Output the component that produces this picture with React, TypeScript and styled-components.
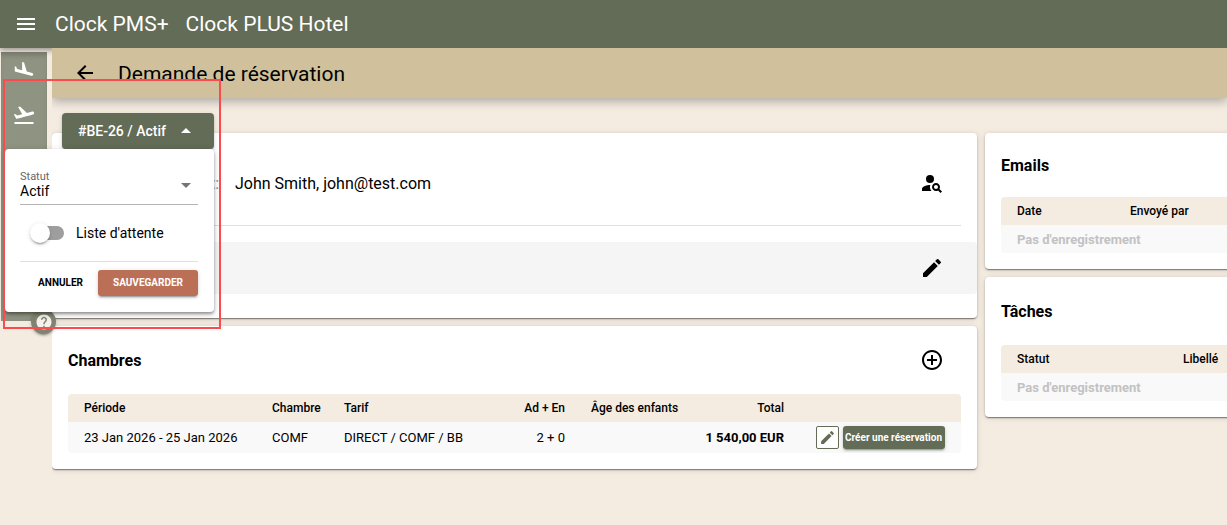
import React, { useState } from "react";
import styled, { createGlobalStyle } from "styled-components";
import {
  MdAddCircleOutline,
  MdArrowBack,
  MdArrowDropDown,
  MdArrowDropUp,
  MdEdit,
  MdFlightLand,
  MdFlightTakeoff,
  MdHelp,
  MdMenu,
  MdPersonSearch,
} from "react-icons/md";

const color = {
  olive: "#636c57",
  sand: "#d0c09b",
  page: "#f4ebe1",
  clay: "#bc6f57",
  ink: "#000000",
  line: "#e0e0e0",
  stripe: "#f9f9f9",
};

const lifted =
  "0 3px 1px -2px rgba(0,0,0,.2), 0 2px 2px 0 rgba(0,0,0,.14), 0 1px 5px 0 rgba(0,0,0,.12)";

const GlobalStyle = createGlobalStyle`
  *, *::before, *::after { box-sizing: border-box; }
  body {
    margin: 0;
    background: ${color.page};
    color: ${color.ink};
    font-family: Roboto, "Liberation Sans", sans-serif;
    font-size: 14px;
    overflow-x: hidden;
  }
  button, select, input { font: inherit; color: inherit; }
  button { cursor: pointer; }
  h1, h2, p { margin: 0; }
`;

const Page = styled.div`
  position: relative;
  min-height: 100vh;
`;

const TopBar = styled.header`
  display: flex;
  align-items: center;
  gap: 17px;
  height: 48px;
  padding: 0 14px;
  background: ${color.olive};
  color: #fff;
  font-size: 21px;
  box-shadow: 0 2px 6px rgba(0, 0, 0, 0.4);
`;

const PlainButton = styled.button<{ $size: number }>`
  display: inline-flex;
  align-items: center;
  justify-content: center;
  flex: none;
  width: ${(p) => p.$size}px;
  height: ${(p) => p.$size}px;
  padding: 0;
  border: 0;
  background: none;
`;

const Body = styled.div`
  display: flex;
  align-items: flex-start;
`;

const Rail = styled.nav`
  position: relative;
  display: flex;
  flex-direction: column;
  align-items: center;
  flex: none;
  gap: 19px;
  width: 46px;
  height: 269px;
  margin: 4px 5px 0 1px;
  padding-top: 8px;
  background: #8f9381;
  color: #fff;
  box-shadow: inset 0 5px 5px -2px rgba(0, 0, 0, 0.2);
`;

const RailLink = styled.a`
  display: flex;
  color: inherit;
`;

const HelpButton = styled.button`
  position: absolute;
  right: -9px;
  bottom: -13px;
  display: flex;
  align-items: center;
  justify-content: center;
  width: 25px;
  height: 25px;
  padding: 0;
  border: 0;
  border-radius: 50%;
  background: #7f8470;
  color: #f6f1ec;
  box-shadow: ${lifted};
  z-index: 1;
`;

const Main = styled.main`
  flex: 1;
  min-width: 0;
  overflow: hidden;
`;

const TitleBar = styled.div`
  position: relative;
  display: flex;
  align-items: center;
  gap: 21px;
  height: 50px;
  padding: 0 21px;
  background: ${color.sand};
  box-shadow: 0 3px 10px rgba(0, 0, 0, 0.3);
`;

const PageTitle = styled.h1`
  padding-top: 2px;
  font-size: 21px;
  font-weight: 400;
`;

/* The side column runs past the window edge, so the row is wider than its parent. */
const Columns = styled.div`
  display: grid;
  grid-template-columns: minmax(0, 1fr) 306px;
  align-items: start;
  gap: 8px;
  width: calc(100% + 64px);
  padding: 35px 0 16px;
`;

const Stack = styled.div`
  display: flex;
  flex-direction: column;
  gap: 8px;
`;

const Card = styled.section`
  border-radius: 4px;
  background: #fff;
  box-shadow: 0 2px 1px -1px rgba(0, 0, 0, 0.3), 0 1px 2px 0 rgba(0, 0, 0, 0.25),
    0 1px 6px 0 rgba(0, 0, 0, 0.12);
`;

const ListCard = styled(Card)`
  padding: 0 16px 16px;
`;

const CardHead = styled.div<{ $tall?: boolean }>`
  display: flex;
  align-items: center;
  justify-content: space-between;
  height: ${(p) => (p.$tall ? 68 : 64)}px;
  padding-right: 8px;
`;

const CardTitle = styled.h2`
  font-size: 16px;
  font-weight: 700;
`;

const ContactRow = styled.div`
  display: flex;
  align-items: center;
  height: 93px;
  margin: 0 16px;
  padding: 8px 8px 0 0;
  border-bottom: 1px solid ${color.line};
  font-size: 16px;
`;

const ContactLabel = styled.span`
  width: 151px;
  margin-right: 16px;
  color: #8a8a8a;
  text-align: right;
`;

const ContactName = styled.p`
  flex: 1;
`;

const NoteRow = styled.div`
  display: flex;
  align-items: center;
  justify-content: flex-end;
  height: 52px;
  margin: 16px 0 24px;
  padding-right: 24px;
  border-radius: 4px;
  background: #f5f5f5;
`;

const Table = styled.table`
  width: 100%;
  border-collapse: separate;
  border-spacing: 0;
  border-radius: 4px;
  overflow: hidden;
  table-layout: fixed;
  font-size: 13px;
`;

const Th = styled.th<{ $w?: number; $right?: boolean }>`
  width: ${(p) => (p.$w ? `${p.$w}px` : "auto")};
  height: 28px;
  padding: 0 13px;
  background: ${color.page};
  font-size: 12px;
  font-weight: 500;
  text-align: ${(p) => (p.$right ? "right" : "left")};
  white-space: nowrap;
  &:first-child { padding-left: 16px; }
`;

const Td = styled.td<{ $right?: boolean; $strong?: boolean }>`
  height: 31px;
  padding: 0 13px;
  background: ${color.stripe};
  font-weight: ${(p) => (p.$strong ? 700 : 400)};
  text-align: ${(p) => (p.$right ? "right" : "left")};
  white-space: nowrap;
  &:first-child { padding-left: 16px; }
`;

const EmptyTd = styled(Td)`
  height: 28px;
  color: #c2c2c2;
  font-weight: 700;
`;

const RowActions = styled.div`
  display: flex;
  justify-content: flex-end;
  gap: 4px;
  padding-right: 3px;
`;

const EditButton = styled.button`
  display: flex;
  align-items: center;
  justify-content: center;
  width: 23px;
  height: 23px;
  padding: 0;
  border: 1px solid ${color.olive};
  border-radius: 2px;
  background: #fff;
  color: ${color.olive};
`;

const CreateButton = styled.button`
  height: 23px;
  padding: 0 3px 0 2px;
  border: 0;
  border-radius: 3px;
  background: ${color.olive};
  color: #fff;
  font-size: 10px;
  font-weight: 700;
  box-shadow: ${lifted};
`;

const StatusMenu = styled.div`
  position: absolute;
  top: 113px;
  left: 5px;
  z-index: 2;
  display: flex;
  flex-direction: column;
  align-items: flex-end;
  width: 209px;
`;

const StatusButton = styled.button`
  display: flex;
  align-items: center;
  gap: 8px;
  height: 36px;
  padding: 0 16px 1px;
  border: 0;
  border-radius: 4px;
  background: ${color.olive};
  color: #fff;
  font-weight: 500;
  white-space: nowrap;
  box-shadow: ${lifted};
`;

const Panel = styled.form`
  position: relative;
  width: 100%;
  padding: 21px 16px 16px 15px;
  border-radius: 4px;
  background: #fff;
  box-shadow: 0 2px 3px rgba(0, 0, 0, 0.35), 0 2px 8px rgba(0, 0, 0, 0.16);
`;

const Field = styled.label`
  position: relative;
  display: block;
  border-bottom: 1px solid #b5b5b5;
`;

const FieldLabel = styled.span`
  display: block;
  color: #666;
  font-size: 11px;
  line-height: 13px;
`;

const Select = styled.select`
  display: block;
  width: 100%;
  height: 21px;
  padding: 0 0 5px;
  border: 0;
  background: none;
  font-size: 14px;
  appearance: none;
`;

const FieldArrow = styled(MdArrowDropDown)`
  position: absolute;
  top: 3px;
  right: 0;
  color: #757575;
  pointer-events: none;
`;

const SwitchRow = styled.label`
  display: flex;
  align-items: center;
  gap: 12px;
  height: 57px;
  padding-left: 12px;
  border-bottom: 1px solid ${color.line};
  font-size: 14px;
`;

const Switch = styled.input`
  display: flex;
  align-items: center;
  width: 32px;
  height: 14px;
  margin: 0;
  border-radius: 7px;
  background: #9e9e9e;
  appearance: none;
  &::before {
    content: "";
    flex: none;
    width: 20px;
    height: 20px;
    margin-left: -2px;
    border-radius: 50%;
    background: #fff;
    box-shadow: ${lifted};
  }
  &:checked { background: #c79a8b; }
  &:checked::before { margin-left: 14px; background: ${color.clay}; }
`;

const PanelActions = styled.div`
  display: flex;
  justify-content: flex-end;
  padding-top: 8px;
`;

const PanelButton = styled.button<{ $filled?: boolean }>`
  height: 26px;
  padding: 0 15px 1px;
  border: 0;
  border-radius: 3px;
  background: ${(p) => (p.$filled ? color.clay : "none")};
  color: ${(p) => (p.$filled ? "#fff" : color.ink)};
  box-shadow: ${(p) => (p.$filled ? lifted : "none")};
  font-size: 10px;
  font-weight: 700;
  text-transform: uppercase;
`;

const Highlight = styled.div`
  position: absolute;
  top: 79px;
  left: 3px;
  z-index: 3;
  width: 218px;
  height: 250px;
  border: 2px solid #fb4b4e;
  pointer-events: none;
`;

export default function App() {
  const [open, setOpen] = useState(true);
  const [waiting, setWaiting] = useState(false);

  return (
    <Page>
      <GlobalStyle />
      <TopBar>
        <PlainButton $size={24} aria-label="Menu">
          <MdMenu size={24} />
        </PlainButton>
        <span>Clock PMS+</span>
        <span>Clock PLUS Hotel</span>
      </TopBar>

      <Body>
        <Rail>
          <RailLink href="#arrivees" aria-label="Arrivées">
            <MdFlightLand size={24} />
          </RailLink>
          <RailLink href="#departs" aria-label="Départs">
            <MdFlightTakeoff size={24} />
          </RailLink>
          <HelpButton aria-label="Aide">
            <MdHelp size={18} />
          </HelpButton>
        </Rail>

        <Main>
          <TitleBar>
            <PlainButton $size={24} aria-label="Retour">
              <MdArrowBack size={24} />
            </PlainButton>
            <PageTitle>Demande de réservation</PageTitle>
          </TitleBar>

          <Columns>
            <Stack>
              <Card>
                <ContactRow>
                  <ContactLabel>Contact:</ContactLabel>
                  <ContactName>John Smith, john@test.com</ContactName>
                  <PlainButton $size={42} aria-label="Chercher un client">
                    <MdPersonSearch size={24} />
                  </PlainButton>
                </ContactRow>
                <NoteRow>
                  <PlainButton $size={42} aria-label="Modifier">
                    <MdEdit size={24} />
                  </PlainButton>
                </NoteRow>
              </Card>

              <ListCard>
                <CardHead $tall>
                  <CardTitle>Chambres</CardTitle>
                  <PlainButton $size={42} aria-label="Ajouter une chambre">
                    <MdAddCircleOutline size={24} />
                  </PlainButton>
                </CardHead>
                <Table>
                  <thead>
                    <tr>
                      <Th $w={191}>Période</Th>
                      <Th $w={72}>Chambre</Th>
                      <Th>Tarif</Th>
                      <Th $w={82} $right>Ad + En</Th>
                      <Th $w={114}>Âge des enfants</Th>
                      <Th $w={105} $right>Total</Th>
                      <Th $w={164} aria-label="Actions" />
                    </tr>
                  </thead>
                  <tbody>
                    <tr>
                      <Td>23 Jan 2026 - 25 Jan 2026</Td>
                      <Td>COMF</Td>
                      <Td>DIRECT / COMF / BB</Td>
                      <Td $right>2 + 0</Td>
                      <Td />
                      <Td $right $strong>1 540,00 EUR</Td>
                      <Td>
                        <RowActions>
                          <EditButton aria-label="Modifier la chambre">
                            <MdEdit size={17} />
                          </EditButton>
                          <CreateButton>Créer une réservation</CreateButton>
                        </RowActions>
                      </Td>
                    </tr>
                  </tbody>
                </Table>
              </ListCard>
            </Stack>

            <Stack>
              <ListCard>
                <CardHead>
                  <CardTitle>Emails</CardTitle>
                </CardHead>
                <Table>
                  <thead>
                    <tr>
                      <Th $w={116}>Date</Th>
                      <Th>Envoyé par</Th>
                    </tr>
                  </thead>
                  <tbody>
                    <tr>
                      <EmptyTd colSpan={2}>Pas d'enregistrement</EmptyTd>
                    </tr>
                  </tbody>
                </Table>
              </ListCard>

              <ListCard>
                <CardHead $tall>
                  <CardTitle>Tâches</CardTitle>
                </CardHead>
                <Table>
                  <thead>
                    <tr>
                      <Th $w={169}>Statut</Th>
                      <Th>Libellé</Th>
                    </tr>
                  </thead>
                  <tbody>
                    <tr>
                      <EmptyTd colSpan={2}>Pas d'enregistrement</EmptyTd>
                    </tr>
                  </tbody>
                </Table>
              </ListCard>
            </Stack>
          </Columns>
        </Main>
      </Body>

      <StatusMenu>
        <StatusButton aria-expanded={open} onClick={() => setOpen(!open)}>
          #BE-26 / Actif
          {open ? <MdArrowDropUp size={24} /> : <MdArrowDropDown size={24} />}
        </StatusButton>
        {open && (
          <Panel onSubmit={(e) => e.preventDefault()}>
            <Field>
              <FieldLabel>Statut</FieldLabel>
              <Select defaultValue="Actif">
                <option>Actif</option>
              </Select>
              <FieldArrow size={24} />
            </Field>
            <SwitchRow>
              <Switch
                type="checkbox"
                role="switch"
                checked={waiting}
                onChange={(e) => setWaiting(e.target.checked)}
              />
              Liste d'attente
            </SwitchRow>
            <PanelActions>
              <PanelButton type="button" onClick={() => setOpen(false)}>
                Annuler
              </PanelButton>
              <PanelButton type="submit" $filled>
                Sauvegarder
              </PanelButton>
            </PanelActions>
          </Panel>
        )}
      </StatusMenu>
      <Highlight />
    </Page>
  );
}
